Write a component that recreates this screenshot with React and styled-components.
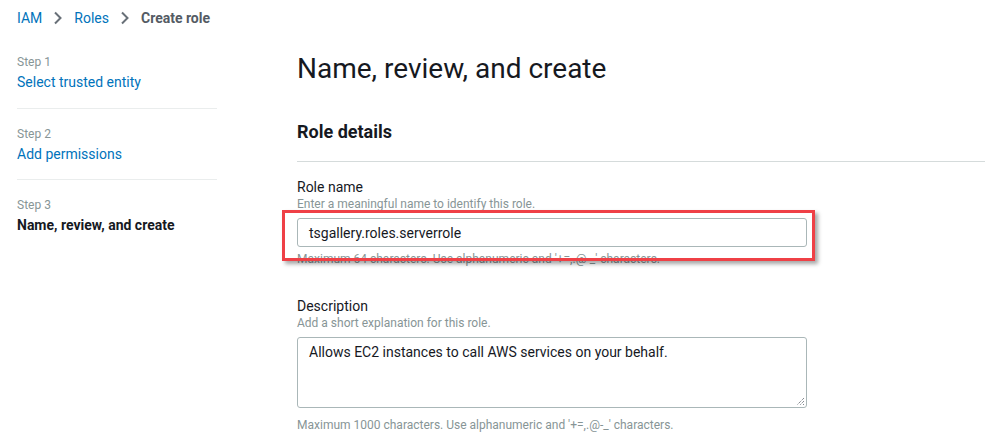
import React from "react";
import styled, { createGlobalStyle } from "styled-components";

const GlobalStyle = createGlobalStyle`
  html, body {
    margin: 0;
    padding: 0;
    background: #ffffff;
    font-family: Roboto, "Liberation Sans", Arial, sans-serif;
    color: #16191f;
  }
`;

const Page = styled.div`
  width: 1008px;
  height: 443px;
  overflow: hidden;
  padding: 8px 0 0 17px;
  box-sizing: border-box;
`;

const Breadcrumbs = styled.nav`
  display: flex;
  align-items: center;
  height: 20px;
  font-size: 14px;
  gap: 11px;
`;

const Crumb = styled.a`
  color: ${(p) => (p.$current ? "#545b64" : "#0073bb")};
  font-weight: ${(p) => (p.$current ? 700 : 400)};
  text-decoration: none;
`;

const Chevron = () => (
  <svg width="10" height="14" viewBox="0 0 10 14">
    <path d="M2 1.5 L7.5 7 L2 12.5" fill="none" stroke="#687078" strokeWidth="2" />
  </svg>
);

const Layout = styled.div`
  display: flex;
  margin-top: 26px;
`;

const Sidebar = styled.ol`
  list-style: none;
  margin: 0;
  padding: 0;
  width: 200px;
  flex: none;
`;

const StepItem = styled.li`
  padding: ${(p) => (p.$first ? "0 0 17px" : "17px 0 16px")};
  border-bottom: ${(p) => (p.$last ? "none" : "1px solid #eaeded")};
`;

const StepNum = styled.div`
  font-size: 12px;
  line-height: 16px;
  color: #879596;
`;

const StepTitle = styled.div`
  margin-top: 3px;
  font-size: 14px;
  line-height: 18px;
  color: ${(p) => (p.$active ? "#16191f" : "#0073bb")};
  font-weight: ${(p) => (p.$active ? 700 : 400)};
`;

const Main = styled.main`
  margin-left: 80px;
  width: 688px;
`;

const Title = styled.h1`
  margin: 0;
  font-size: 28px;
  line-height: 36px;
  font-weight: 400;
  color: #16191f;
  margin-top: -3px;
`;

const SectionTitle = styled.h2`
  margin: 33px 0 0;
  font-size: 18px;
  line-height: 24px;
  font-weight: 700;
  color: #16191f;
  padding-bottom: 17px;
  border-bottom: 1px solid #d5dbdb;
`;

const Field = styled.div`
  margin-top: ${(p) => p.$mt || 0}px;
  width: 510px;
`;

const Label = styled.div`
  font-size: 14px;
  line-height: 18px;
  color: #16191f;
`;

const Hint = styled.div`
  font-size: 12px;
  line-height: 16px;
  color: #879596;
`;

const InputWrap = styled.div`
  position: relative;
  margin-top: 6px;
`;

const Input = styled.div`
  box-sizing: border-box;
  height: 29px;
  border: 1px solid #aab7b8;
  border-radius: 3px;
  padding: 0 11px;
  display: flex;
  align-items: center;
  font-size: 14px;
  color: #16191f;
`;

const TextArea = styled.div`
  position: relative;
  box-sizing: border-box;
  height: 71px;
  border: 1px solid #aab7b8;
  border-radius: 3px;
  padding: 5px 11px;
  font-size: 14px;
  line-height: 18px;
  color: #16191f;
`;

const Grip = styled.svg`
  position: absolute;
  right: 1px;
  bottom: 1px;
`;

const Constraint = styled.div`
  margin-top: ${(p) => p.$mt || 4}px;
  font-size: 12px;
  line-height: 16px;
  color: #879596;
`;

const Highlight = styled.div`
  position: absolute;
  left: -15px;
  top: -8px;
  width: 533px;
  height: 51px;
  box-sizing: border-box;
  border: 3px solid #ef4046;
  box-shadow: 3px 3px 4px rgba(0, 0, 0, 0.35);
  pointer-events: none;
`;

const steps = [
  { n: 1, title: "Select trusted entity" },
  { n: 2, title: "Add permissions" },
  { n: 3, title: "Name, review, and create", active: true },
];

export default function App() {
  return (
    <>
      <GlobalStyle />
      <Page>
        <Breadcrumbs>
          <Crumb>IAM</Crumb>
          <Chevron />
          <Crumb>Roles</Crumb>
          <Chevron />
          <Crumb $current>Create role</Crumb>
        </Breadcrumbs>
        <Layout>
          <Sidebar>
            {steps.map((s, i) => (
              <StepItem key={s.n} $first={i === 0} $last={i === steps.length - 1}>
                <StepNum>Step {s.n}</StepNum>
                <StepTitle $active={s.active}>{s.title}</StepTitle>
              </StepItem>
            ))}
          </Sidebar>
          <Main>
            <Title>Name, review, and create</Title>
            <SectionTitle>Role details</SectionTitle>
            <Field $mt={16}>
              <Label>Role name</Label>
              <Hint>Enter a meaningful name to identify this role.</Hint>
              <InputWrap>
                <Input>tsgallery.roles.serverrole</Input>
                <Constraint>Maximum 64 characters. Use alphanumeric and '+=,.@-_' characters.</Constraint>
                <Highlight />
              </InputWrap>
            </Field>
            <Field $mt={30}>
              <Label>Description</Label>
              <Hint>Add a short explanation for this role.</Hint>
              <InputWrap>
                <TextArea>
                  Allows EC2 instances to call AWS services on your behalf.
                  <Grip width="10" height="10" viewBox="0 0 10 10">
                    <path d="M9 2 L2 9 M9 5 L5 9 M9 8 L8 9" stroke="#545b64" strokeWidth="1" strokeDasharray="1 1" />
                  </Grip>
                </TextArea>
                <Constraint $mt={9}>Maximum 1000 characters. Use alphanumeric and '+=,.@-_' characters.</Constraint>
              </InputWrap>
            </Field>
          </Main>
        </Layout>
      </Page>
    </>
  );
}
